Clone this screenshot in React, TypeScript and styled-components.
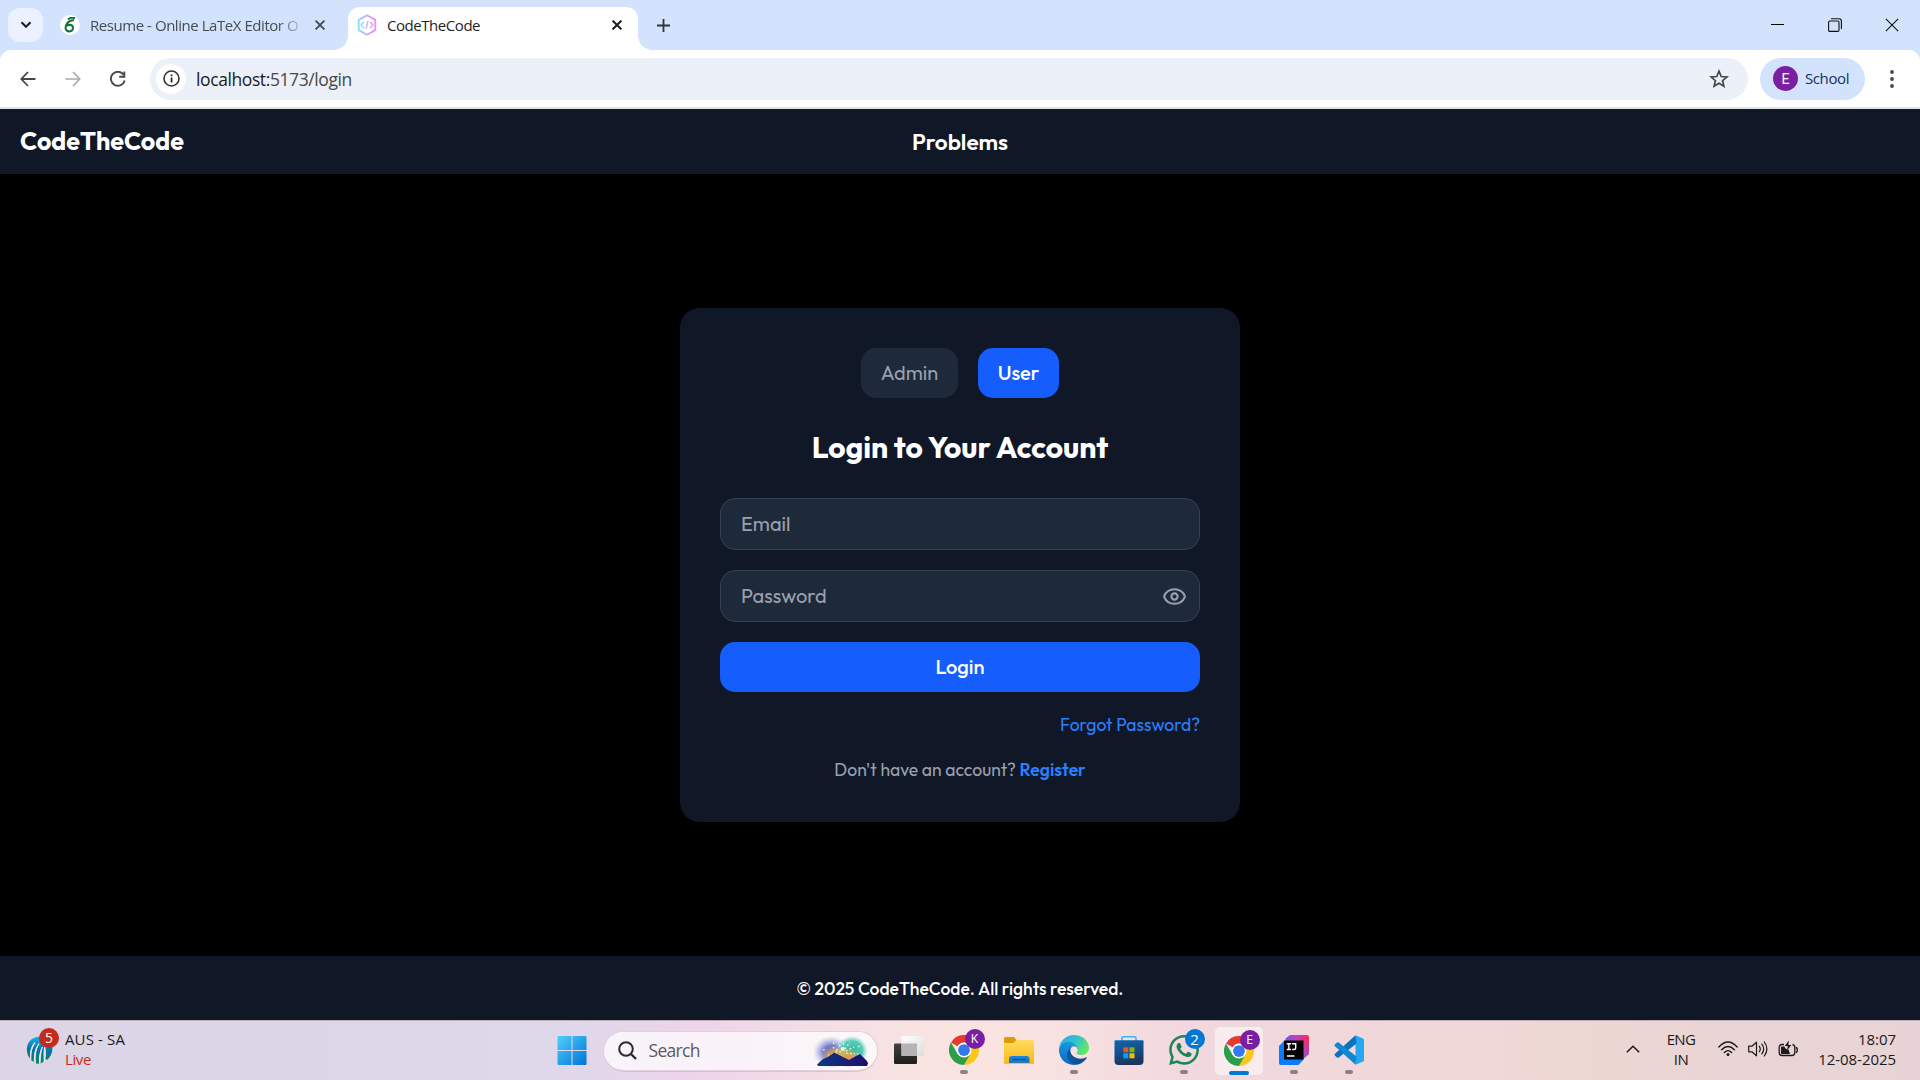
import React from "react";
import styled, { createGlobalStyle, css } from "styled-components";

const UI = `"Open Sans", "Noto Sans", sans-serif`;
const BRAND = `Outfit, Lato, sans-serif`;

const GlobalStyle = createGlobalStyle`
  *, *::before, *::after { box-sizing: border-box; }
  body { margin: 0; background: #000; overflow: hidden; }
  button, input { font: inherit; border: 0; margin: 0; padding: 0; background: none; color: inherit; }
  svg { display: block; flex: none; }
`;

const Screen = styled.div`
  width: 1920px;
  height: 1080px;
  display: flex;
  flex-direction: column;
  overflow: hidden;
`;

/* ---------- Browser: tab strip ---------- */

const TabStrip = styled.div`
  height: 50px;
  flex: none;
  display: flex;
  align-items: center;
  padding-left: 8px;
  background: #d3e3fd;
  font: 15px ${UI};
`;

const TabSearch = styled.button`
  width: 35px;
  height: 34px;
  border-radius: 12px;
  background: #ebf1fe;
  display: grid;
  place-items: center;
`;

const Tab = styled.div<{ $active?: boolean }>`
  position: relative;
  display: flex;
  align-items: center;
  height: 42px;
  letter-spacing: -0.45px;
  color: #474b50;
  width: 285px;
  padding: 0 4px 0 16px;
  margin-left: 1px;
  ${(p) =>
    p.$active &&
    css`
      align-self: flex-end;
      width: 290px;
      height: 43px;
      margin-left: 19px;
      padding: 0 16px 7px 9px;
      color: #1f1f1f;
      background: #fff;
      border-radius: 12px 12px 0 0;
      &::before,
      &::after {
        content: "";
        position: absolute;
        bottom: 0;
        width: 14px;
        height: 14px;
      }
      &::before {
        left: -14px;
        background: radial-gradient(circle at 0 0, transparent 13.5px, #fff 14px);
      }
      &::after {
        right: -14px;
        background: radial-gradient(circle at 100% 0, transparent 13.5px, #fff 14px);
      }
    `}
`;

const TabTitle = styled.span<{ $fade?: boolean }>`
  flex: 1;
  min-width: 0;
  white-space: nowrap;
  margin-left: 10px;
  ${(p) => p.$fade && "mask-image: linear-gradient(90deg, #000 188px, transparent 216px);"}
`;

const Favicon = styled.span`
  width: 20px;
  height: 20px;
  border-radius: 50%;
  background: #fff;
  display: grid;
  place-items: center;
`;

const NewTab = styled.button`
  width: 34px;
  height: 34px;
  margin-left: 8px;
  display: grid;
  place-items: center;
`;

const WindowControls = styled.div`
  margin-left: auto;
  display: flex;
  height: 100%;
`;

const WindowButton = styled.button`
  width: 57px;
  display: grid;
  place-items: center;
`;

/* ---------- Browser: address row ---------- */

const AddressBack = styled.div`
  height: 57px;
  flex: none;
  background: #d3e3fd;
`;

const AddressRow = styled.div`
  height: 57px;
  background: #fff;
  border-radius: 11px 11px 0 0;
  display: flex;
  align-items: center;
  padding: 0 10px 0 5px;
`;

const NavButton = styled.button`
  width: 45px;
  height: 42px;
  display: grid;
  place-items: center;
`;

const Omnibox = styled.div`
  flex: 1;
  height: 42px;
  margin-left: 10px;
  padding: 0 19px 0 6px;
  border-radius: 21px;
  background: #ebf0f9;
  display: flex;
  align-items: center;
  font: 17.5px ${UI};
  letter-spacing: -0.4px;
  color: #474747;
`;

const SiteInfo = styled.span`
  width: 30px;
  height: 30px;
  border-radius: 50%;
  background: #fff;
  display: grid;
  place-items: center;
  margin-right: 10px;
`;

const Url = styled.span`
  flex: 1;
  b { font-weight: 400; color: #1b1b1b; }
`;

const Profile = styled.button`
  height: 42px;
  width: 105px;
  margin-left: 12px;
  padding-left: 13px;
  border-radius: 21px;
  background: #d3e3fd;
  display: flex;
  align-items: center;
  gap: 7px;
  font: 15px ${UI};
  letter-spacing: -0.4px;
  color: #14305c;
`;

const ProfileName = styled.span`
  padding-bottom: 1px;
`;

const Avatar = styled.span`
  width: 25px;
  height: 25px;
  border-radius: 50%;
  background: #7b1fa2;
  color: #fff;
  display: grid;
  place-items: center;
  font: 14px Roboto, sans-serif;
  letter-spacing: 0;
`;

const Menu = styled.button`
  width: 36px;
  margin-left: 9px;
  display: grid;
  place-items: center;
`;

/* ---------- Site ---------- */

const SiteHeader = styled.header`
  flex: none;
  height: 67px;
  border-top: 2px solid #dfe4df;
  padding: 0 20px;
  background: #101828;
  color: #fff;
  font-family: ${BRAND};
  display: grid;
  grid-template-columns: 1fr auto 1fr;
  align-items: center;
`;

const Brand = styled.span`
  font-size: 25px;
  font-weight: 700;
  padding-bottom: 1px;
`;

const HeaderLink = styled.a`
  font-size: 22.5px;
  font-weight: 600;
`;

const Main = styled.main`
  flex: 1;
  min-height: 0;
  background: #000;
  display: grid;
  place-items: center;
  font-family: ${BRAND};
`;

const Card = styled.form`
  width: 560px;
  height: 514px;
  padding: 40px;
  border-radius: 20px;
  background: #101828;
  display: flex;
  flex-direction: column;
`;

const RoleSwitch = styled.div`
  display: flex;
  justify-content: center;
  gap: 20px;
`;

const RoleButton = styled.button<{ $selected?: boolean }>`
  height: 50px;
  width: ${(p) => (p.$selected ? 81 : 97)}px;
  padding-bottom: 2px;
  border-radius: 15px;
  font-size: 20px;
  font-weight: ${(p) => (p.$selected ? 500 : 400)};
  color: ${(p) => (p.$selected ? "#fff" : "#99a1af")};
  background: ${(p) => (p.$selected ? "#155dfc" : "#1e2939")};
`;

const Title = styled.h2`
  margin: 29px 0 31px;
  height: 40px;
  line-height: 40px;
  text-align: center;
  font-size: 30px;
  font-weight: 700;
  color: #fff;
`;

const Field = styled.label`
  height: 52px;
  margin-bottom: 20px;
  padding: 0 12px 0 20px;
  border: 1px solid #364153;
  border-radius: 15px;
  background: #1e2939;
  color: #99a1af;
  display: flex;
  align-items: center;
`;

const Input = styled.input`
  flex: 1;
  height: 100%;
  padding-bottom: 2px;
  outline: none;
  font-size: 20px;
  color: #fff;
  &::placeholder { color: #99a1af; opacity: 1; }
`;

const Submit = styled.button`
  height: 50px;
  padding-bottom: 2px;
  border-radius: 15px;
  background: #155dfc;
  color: #fff;
  font-size: 20px;
  font-weight: 500;
`;

const Forgot = styled.a`
  align-self: flex-end;
  margin-top: 20px;
  line-height: 25px;
  font-size: 17.5px;
  color: #2b7fff;
`;

const RegisterLine = styled.p`
  margin: 20px 0 0;
  line-height: 25px;
  text-align: center;
  font-size: 17.5px;
  color: #99a1af;
  a { font-weight: 600; color: #2b7fff; }
`;

const SiteFooter = styled.footer`
  flex: none;
  height: 64px;
  background: #101828;
  color: #fff;
  display: grid;
  place-items: center;
  font: 500 17.5px ${BRAND};
`;

/* ---------- Taskbar ---------- */

const Taskbar = styled.div`
  flex: none;
  height: 60px;
  border-top: 1px solid #b9aeb8;
  display: flex;
  align-items: center;
  font: 15px ${UI};
  color: #1a1a1a;
  background: linear-gradient(90deg, #ddd5e6 0, #dad6e8 260px, #dfd8ea 560px, #edd4ea 690px, #f3dde6 800px, #f9e4e1 930px, #f8e3e1 1040px, #f2d8df 1180px, #f1d8db 1330px, #edd7d2 1580px, #e9d5d5 1720px, #e8d3d6 1920px);
`;

const Widget = styled.div`
  width: 544.5px;
  padding: 0 0 3px 26px;
  display: flex;
  align-items: center;
`;

const WidgetIcon = styled.div`
  position: relative;
  width: 28px;
  height: 30px;
  margin: 2px 11px 0 0;
`;

const TwoLines = styled.div<{ $align?: string }>`
  display: flex;
  flex-direction: column;
  line-height: 20px;
  text-align: ${(p) => p.$align || "left"};
`;

const Score = styled.span`
  letter-spacing: 0.13px;
`;

const Live = styled.span`
  color: #c42b1c;
  letter-spacing: -0.4px;
`;

const Badge = styled.span<{ $bg: string; $top?: number; $right?: number; $size?: number }>`
  position: absolute;
  top: ${(p) => p.$top ?? -6}px;
  right: ${(p) => p.$right ?? -6}px;
  width: 20px;
  height: 20px;
  border-radius: 50%;
  background: ${(p) => p.$bg};
  color: #fff;
  display: grid;
  place-items: center;
  font: ${(p) => p.$size ?? 14}px/1 ${UI};
`;

const Slot = styled.div<{ $active?: boolean }>`
  width: 55px;
  height: 59px;
  display: flex;
  flex-direction: column;
  align-items: center;
  ${(p) =>
    p.$active &&
    css`
      width: 48px;
      height: 48px;
      margin: 0 3.5px;
      border-radius: 5px;
      background: #f9ecee;
      box-shadow: 0 0 0 1px #ecdadd;
    `}
`;

const SlotIcon = styled.div<{ $active?: boolean }>`
  position: relative;
  width: 30px;
  height: 30px;
  margin-top: ${(p) => (p.$active ? 9 : 14)}px;
`;

const Running = styled.span<{ $active?: boolean }>`
  width: ${(p) => (p.$active ? 20 : 8)}px;
  height: 4px;
  margin-top: 5px;
  border-radius: 2px;
  background: ${(p) => (p.$active ? "#0078d4" : "#8c8080")};
`;

const SearchBox = styled.div`
  width: 273px;
  height: 38px;
  margin: 0 4.5px 0 4px;
  padding: 0 9px 0 14px;
  border-radius: 19px;
  background: linear-gradient(90deg, #f8f4fa, #faf2f9 50%, #fdf8f7);
  box-shadow: 0 0 0 1px #e3cfdd, 0 1.5px 0 #bfa9b8;
  display: flex;
  align-items: center;
  font-size: 17.5px;
  letter-spacing: -0.7px;
  color: #5c5a5e;
`;

const SearchLabel = styled.span`
  flex: 1;
  margin-left: 12px;
  padding-bottom: 1px;
`;

const Tray = styled.div`
  margin-left: auto;
  padding: 0 24px 3px 0;
  display: flex;
  align-items: center;
`;

const TrayCell = styled.div<{ $w: number }>`
  width: ${(p) => p.$w}px;
  display: grid;
  place-items: center;
`;

const Language = styled(TwoLines)`
  width: 48px;
  margin-right: 8px;
  letter-spacing: -0.6px;
`;

const Clock = styled(TwoLines)`
  width: 93px;
  letter-spacing: -0.05px;
`;

/* ---------- Icons ---------- */

const CloseIcon = ({ size = 10, w = 1.8, color = "#333" }) => (
  <svg width={size} height={size} viewBox="0 0 10 10" stroke={color} strokeWidth={w}>
    <path d="M.6.6l8.8 8.8M9.4.6L.6 9.4" />
  </svg>
);

const Chrome = () => (
  <svg width="30" height="30" viewBox="0 0 48 48">
    <path d="M24 24L3.2 12A24 24 0 0 1 44.8 12z" fill="#e33b2e" />
    <path d="M24 12h20.8A24 24 0 0 1 24 48l10.4-18z" fill="#fdc719" />
    <path d="M13.6 30L3.2 12A24 24 0 0 0 24 48l10.4-18z" fill="#2a9f48" />
    <circle cx="24" cy="24" r="12" fill="#fff" />
    <circle cx="24" cy="24" r="9.4" fill="#3478ee" />
  </svg>
);

const Folder = () => (
  <svg width="30" height="30" viewBox="0 0 30 30">
    <defs>
      <linearGradient id="fold" x2="0" y2="1"><stop stopColor="#ffdc5e" /><stop offset="1" stopColor="#fbb917" /></linearGradient>
      <linearGradient id="fblue" x2="0" y2="1"><stop stopColor="#1789dc" /><stop offset="1" stopColor="#1a72c4" /></linearGradient>
    </defs>
    <path d="M0 3.500Q0 2 1.500 2H10l2.500 3L10 8H0z" fill="#dd9b09" />
    <path d="M0 8h9.500l3-3H29q1 0 1 1v22H0z" fill="url(#fold)" />
    <path d="M5 28v-4q0-3 3-3h14.500q3 0 3 3v4z" fill="url(#fblue)" />
    <path d="M8.500 24.500h13" stroke="#0b4e91" strokeWidth="1.200" />
    <path d="M0 28.300h30" stroke="#dc9d21" strokeWidth=".7" />
  </svg>
);

const Edge = () => (
  <svg width="30" height="30" viewBox="0 0 256 256">
    <defs>
      <linearGradient id="e1" x1="0" x2="1" y1=".6" y2=".6"><stop stopColor="#0c59a4" /><stop offset="1" stopColor="#114a8b" /></linearGradient>
      <linearGradient id="e2" x1=".7" y1="0" x2=".3" y2="1"><stop stopColor="#1b9de2" /><stop offset=".5" stopColor="#1288d8" /><stop offset="1" stopColor="#0a66c4" /></linearGradient>
      <linearGradient id="e3" x1="0" y1=".2" x2="1" y2=".7"><stop stopColor="#35a9e6" /><stop offset=".45" stopColor="#2fc2cf" /><stop offset="1" stopColor="#6be957" /></linearGradient>
    </defs>
    <path d="M231 190.500c-3.400 1.800-6.900 3.400-10.500 4.700a101.900 101.900 0 0 1-35.900 6.500c-47.300 0-88.500-32.500-88.500-74.300a31.500 31.500 0 0 1 16.400-27.300c-42.800 1.800-53.800 46.400-53.800 72.500 0 73.900 68.100 81.400 82.800 81.400 7.900 0 19.800-2.300 27-4.600l1.300-.4a128.300 128.300 0 0 0 66.600-52.800 4 4 0 0 0-5.400-5.700z" fill="url(#e1)" />
    <path d="M105.700 241.400a79.200 79.200 0 0 1-22.700-21.300 80.700 80.700 0 0 1 29.500-120c3.200-1.500 8.500-4.100 15.600-4a32.400 32.400 0 0 1 25.700 13 31.900 31.900 0 0 1 6.300 18.700c0-.2 24.500-79.600-80-79.600-43.900 0-80 41.700-80 78.200a130.200 130.200 0 0 0 12.100 56 128 128 0 0 0 156.400 67 75.500 75.500 0 0 1-62.800-8z" fill="url(#e2)" />
    <path d="M152.300 148.900c-.9 1-3.400 2.500-3.400 5.600 0 2.600 1.700 5.200 4.800 7.300 14.300 10 41.400 8.600 41.500 8.600a59.600 59.600 0 0 0 30.300-8.300 61.400 61.400 0 0 0 30.400-52.900c.3-22.400-8-37.300-11.300-43.900C223.500 23.900 177.700 0 128 0A128 128 0 0 0 0 126.200c.5-36.500 36.800-66 80-66 3.500 0 23.500.3 42 10a72.600 72.600 0 0 1 30.900 29.300c6.100 10.600 7.200 24.100 7.200 29.500s-2.700 13.300-7.800 19.900z" fill="url(#e3)" />
  </svg>
);

const Store = () => (
  <svg width="30" height="30" viewBox="0 0 30 30">
    <defs><linearGradient id="st" x2=".3" y2="1"><stop stopColor="#0d68b5" /><stop offset="1" stopColor="#1c365f" /></linearGradient></defs>
    <path d="M8 6V3q0-1.300 1.300-1.300h11.400Q22 1.700 22 3v3" fill="none" stroke="#2fb9ef" strokeWidth="1.600" />
    <path d="M.5 6.200q0-1 1-1h27q1 0 1 1V26q0 4-4 4h-21q-4 0-4-4z" fill="url(#st)" />
    <path d="M9.300 12.300h5v5h-5z" fill="#f25022" /><path d="M15.500 12.300h5v5h-5z" fill="#7fba00" />
    <path d="M9.300 18.300h5v5h-5z" fill="#00a4ef" /><path d="M15.500 18.300h5v5h-5z" fill="#ffb900" />
  </svg>
);

const WhatsApp = () => (
  <svg width="30" height="30" viewBox="0 0 24 24" fill="#1a8754">
    <path d="M17.472 14.382c-.297-.149-1.758-.867-2.030-.967-.273-.099-.471-.148-.67.150-.197.297-.767.966-.940 1.164-.173.199-.347.223-.644.075-.297-.150-1.255-.463-2.390-1.475-.883-.788-1.480-1.761-1.653-2.059-.173-.297-.018-.458.130-.606.134-.133.298-.347.446-.520.149-.174.198-.298.298-.497.099-.198.050-.371-.025-.520-.075-.149-.669-1.612-.916-2.207-.242-.579-.487-.5-.669-.510-.173-.008-.371-.010-.570-.010-.198 0-.520.074-.792.372-.272.297-1.040 1.016-1.040 2.479 0 1.462 1.065 2.875 1.213 3.074.149.198 2.096 3.200 5.077 4.487.709.306 1.262.489 1.694.625.712.227 1.360.195 1.871.118.571-.085 1.758-.719 2.006-1.413.248-.694.248-1.289.173-1.413-.074-.124-.272-.198-.570-.347m-5.421 7.403h-.004a9.870 9.870 0 0 1-5.031-1.378l-.361-.214-3.741.982.998-3.648-.235-.374a9.860 9.860 0 0 1-1.510-5.260c.001-5.450 4.436-9.884 9.888-9.884 2.640 0 5.122 1.030 6.988 2.898a9.825 9.825 0 0 1 2.893 6.994c-.003 5.450-4.437 9.884-9.885 9.884m8.413-18.297A11.815 11.815 0 0 0 12.050 0C5.495 0 .160 5.335.157 11.892c0 2.096.547 4.142 1.588 5.945L.057 24l6.305-1.654a11.882 11.882 0 0 0 5.683 1.448h.005c6.554 0 11.890-5.335 11.893-11.893a11.821 11.821 0 0 0-3.480-8.413z" />
  </svg>
);

const Idea = () => (
  <svg width="30" height="30" viewBox="0 0 30 30">
    <defs>
      <linearGradient id="ij" x1="0" y1=".3" x2="1" y2=".1"><stop stopColor="#6f57e8" /><stop offset=".45" stopColor="#b845c0" /><stop offset="1" stopColor="#ff2857" /></linearGradient>
      <linearGradient id="ijr" x2="0" y2="1"><stop stopColor="#ff2857" /><stop offset="1" stopColor="#8f55d8" /></linearGradient>
    </defs>
    <path d="M6.500 3.500L11 0h17q2 0 2 2v17l-7 6H6.500z" fill="url(#ij)" />
    <path d="M24 5l6-3v17l-6 5z" fill="url(#ijr)" />
    <path d="M0 11l5.500-5.500V24H25l-5.500 6H2q-2 0-2-2z" fill="#087cfa" />
    <path d="M5 5.500h19.500V24.500H5z" fill="#000" />
    <path d="M7.700 8.700h4.300M7.700 14.500h4.300M9.850 8.700v5.800M13 8.700h3.700v4q0 1.800-1.800 1.800h-1.700" stroke="#fff" strokeWidth="1.400" fill="none" />
    <path d="M8 21h7.500" stroke="#fff" strokeWidth="1.500" />
  </svg>
);

const VSCode = () => (
  <svg width="30" height="30" viewBox="0 0 30 30">
    <path d="M21.500.3L29 3.500q1 .5 1 1.500v20q0 1-1 1.500l-7.500 3.200z" fill="#25a7f3" />
    <path d="M21.500.3L1 18.800q-1 1 0 2l2 1.700q.8.600 1.700 0L22.500 8.500z" fill="#0a73bd" />
    <path d="M21.500 29.700L1 11.200q-1-1 0-2l2-1.700q.8-.6 1.700 0L22.500 21.500z" fill="#1387d0" />
  </svg>
);

const Start = () => (
  <svg width="30" height="30" viewBox="0 0 30 30">
    <defs><linearGradient id="win" x2="1" y2="1"><stop stopColor="#4fd0fb" /><stop offset="1" stopColor="#0074d6" /></linearGradient></defs>
    <path d="M.5 2q0-1 1-1H14.500v14H.5zM15.500 1H28.500q1 0 1 1v13h-14zM.5 16h14v14h-13q-1 0-1-1zM15.500 16h14v13q0 1-1 1h-13z" fill="url(#win)" />
  </svg>
);

const TaskView = () => (
  <svg width="30" height="30" viewBox="0 0 30 30">
    <defs>
      <linearGradient id="tv" x2="1" y2="1"><stop stopColor="#fff" /><stop offset="1" stopColor="#dedcdc" /></linearGradient>
      <linearGradient id="tb" x2="0" y2="1"><stop stopColor="#42423f" /><stop offset="1" stopColor="#1d1d1d" /></linearGradient>
    </defs>
    <rect x="0" y="8.500" width="23" height="20.500" rx="1.200" fill="url(#tb)" />
    <rect x="7.500" y="1" width="22.500" height="20" rx="1" fill="url(#tv)" />
    <rect x="7.500" y="8.500" width="15.500" height="12.500" fill="#b5b3b3" />
  </svg>
);

const Fireworks = () => (
  <svg width="54" height="32" viewBox="0 0 54 32">
    <defs>
      <radialGradient id="fw1"><stop stopColor="#4a51b8" /><stop offset=".45" stopColor="#6a74c9" stopOpacity=".85" /><stop offset="1" stopColor="#9aa2e4" stopOpacity="0" /></radialGradient>
      <radialGradient id="fw2"><stop stopColor="#35b9a0" /><stop offset=".65" stopColor="#3fc7b3" stopOpacity=".9" /><stop offset="1" stopColor="#8ce0d6" stopOpacity="0" /></radialGradient>
      <radialGradient id="fw3"><stop stopColor="#f58a55" /><stop offset=".5" stopColor="#dfa94c" stopOpacity=".8" /><stop offset="1" stopColor="#dfb95c" stopOpacity="0" /></radialGradient>
      <linearGradient id="mt" x2="1"><stop stopColor="#0e3b7c" /><stop offset="1" stopColor="#1b0d70" /></linearGradient>
    </defs>
    <ellipse cx="17" cy="17" rx="18" ry="16" fill="url(#fw1)" />
    <ellipse cx="38" cy="16" rx="16" ry="15.500" fill="url(#fw2)" />
    <ellipse cx="21" cy="20" rx="13" ry="9" fill="url(#fw3)" />
    <ellipse cx="34" cy="23" rx="12" ry="10" fill="url(#fw3)" />
    <path d="M28 15l-3-6M29 14l1-8M31 14l5-7M32 16l8-4M32 18l9 1M24 15l-6-3M23 18l-9 2M27 17l-6-1M20 9l-2-3M44 12l3-2M43 19l4 1M9 15l4-1" stroke="#fff6d8" strokeWidth="1.200" strokeDasharray="1.800 2.200" />
    <circle cx="29" cy="14" r="2.200" fill="#fff4d0" opacity=".85" />
    <path d="M3 29.500L9 24l5-2 6-4.500 7 3.500 8 4 7-4 4-2 7 7 1 2.500-1 2.500H4z" fill="url(#mt)" />
  </svg>
);

const Cricket = () => (
  <svg width="28" height="30" viewBox="0 0 28 30">
    <defs><linearGradient id="icc" x1=".6" x2=".5" y2="1"><stop stopColor="#12b8ea" /><stop offset=".5" stopColor="#0871a8" /><stop offset="1" stopColor="#078a5a" /></linearGradient></defs>
    <path d="M1.500 19Q-1 9 6 4q7-4 13-1.500 6 3.500 7.500 10.500-.5 8-5.500 12l-1.500-1Q21 17 19 12l-1 2q1 7-.5 13l-3 1.500Q15 20 16 12q-3 7-3 16.800l-3-.3Q8.500 19 12.500 9 7 16 8 27l-2.500-1.500Q4 17 8.500 8 3.500 13 4 23.500 2 21.500 1.500 19z" fill="url(#icc)" />
    <path d="M4.600 23Q4 14 9 7.500M9 27.500Q7.500 17 13 8.500M16.500 12Q13 19 13.700 28M19 12Q17.500 18 18.600 27" stroke="#ece9f3" strokeWidth="1.300" fill="none" />
  </svg>
);

type AppEntry = { id: string; icon: React.ReactNode; running?: boolean; active?: boolean; badge?: string; badgeBg?: string; badgeSize?: number };

const apps: AppEntry[] = [
  { id: "tasks", icon: <TaskView /> },
  { id: "chrome-k", icon: <Chrome />, running: true, badge: "K", badgeBg: "#7b1fa2", badgeSize: 12 },
  { id: "files", icon: <Folder /> },
  { id: "edge", icon: <Edge />, running: true },
  { id: "store", icon: <Store /> },
  { id: "whatsapp", icon: <WhatsApp />, running: true, badge: "2", badgeBg: "#0078d4", badgeSize: 15 },
  { id: "chrome-e", icon: <Chrome />, running: true, active: true, badge: "E", badgeBg: "#7b1fa2", badgeSize: 12 },
  { id: "idea", icon: <Idea />, running: true },
  { id: "vscode", icon: <VSCode />, running: true },
];

export default function App() {
  return (
    <Screen>
      <GlobalStyle />
      <TabStrip>
        <TabSearch aria-label="Search tabs">
          <svg width="12" height="8" viewBox="0 0 12 8" fill="none" stroke="#1f1f1f" strokeWidth="2.200"><path d="M1.500 1.200L6 5.700l4.500-4.500" /></svg>
        </TabSearch>
        <Tab>
          <Favicon>
            <svg width="12" height="16" viewBox="0 0 12 16" fill="none" stroke="#13703b" strokeWidth="2">
              <path d="M11 1.300Q6.500 0 4 2.500" />
              <path d="M10 3.200Q6 3 3.500 6 1.200 8.700 1.500 11.200 2 14.500 5.300 14.500 8.800 14.300 9 11 8.800 7.800 5.600 7.800 3.500 8 2.600 9.300" />
            </svg>
          </Favicon>
          <TabTitle $fade>Resume - Online LaTeX Editor O</TabTitle>
          <CloseIcon color="#44474c" />
        </Tab>
        <Tab $active>
          <svg width="20" height="22" viewBox="0 0 20 22" fill="none" strokeLinejoin="round">
            <defs><linearGradient id="hex" x2="1"><stop stopColor="#86dcfb" /><stop offset=".5" stopColor="#bfb0fb" /><stop offset="1" stopColor="#f58af5" /></linearGradient></defs>
            <path d="M10 1.200l8.300 4.700v10.200L10 20.800l-8.300-4.700V5.900z" stroke="url(#hex)" strokeWidth="1.800" />
            <path d="M7 8l-3 3 3 3M13 8l3 3-3 3M11 7l-2 8" stroke="url(#hex)" strokeWidth="1.300" />
          </svg>
          <TabTitle>CodeTheCode</TabTitle>
          <CloseIcon w={2} color="#1f1f1f" />
        </Tab>
        <NewTab aria-label="New tab">
          <svg width="13" height="13" viewBox="0 0 13 13" stroke="#333" strokeWidth="1.800"><path d="M6.500 0v13M0 6.500h13" /></svg>
        </NewTab>
        <WindowControls>
          <WindowButton aria-label="Minimize"><svg width="13" height="13" viewBox="0 0 13 13"><path d="M0 5h13v1H0z" fill="#000" /></svg></WindowButton>
          <WindowButton aria-label="Restore">
            <svg width="14" height="14" viewBox="0 0 14 14" fill="none" stroke="#111" strokeWidth="1.100"><rect x=".6" y="3" width="10.400" height="10.400" rx="1.200" /><path d="M3 .7h8Q13.400.7 13.400 3v8" /></svg>
          </WindowButton>
          <WindowButton aria-label="Close"><CloseIcon size={14} w={0.8} color="#111" /></WindowButton>
        </WindowControls>
      </TabStrip>

      <AddressBack>
        <AddressRow>
          <NavButton aria-label="Back"><svg width="16" height="16" viewBox="0 0 16 16" fill="none" stroke="#474747" strokeWidth="1.800"><path d="M15.500 8H1.500M8 1L1.300 8 8 15" /></svg></NavButton>
          <NavButton aria-label="Forward"><svg width="16" height="16" viewBox="0 0 16 16" fill="none" stroke="#ababab" strokeWidth="1.700"><path d="M.5 8h14M8 1l6.700 7L8 15" /></svg></NavButton>
          <NavButton aria-label="Reload">
            <svg width="16" height="16" viewBox="0 0 16 16" fill="none" stroke="#474747" strokeWidth="1.900"><path d="M13.600 3.700A7 7 0 1 0 14.700 9.500" /><path d="M14.300.5v5.200H9.200" /></svg>
          </NavButton>
          <Omnibox>
            <SiteInfo>
              <svg width="17" height="17" viewBox="0 0 17 17"><circle cx="8.500" cy="8.500" r="7.500" fill="none" stroke="#333" strokeWidth="1.600" /><path d="M7.700 7.500h1.700v5H7.700zM7.700 4.500h1.700v1.700H7.700z" fill="#222" /></svg>
            </SiteInfo>
            <Url><b>localhost:</b>5173/login</Url>
            <svg width="20" height="20" viewBox="0 0 20 20" fill="none" stroke="#474747" strokeWidth="1.700"><path d="M10 2.200l2.200 5.300 5.700.5-4.300 3.700 1.300 5.600-4.900-3-4.900 3 1.300-5.600L2.100 8l5.700-.5z" /></svg>
          </Omnibox>
          <Profile><Avatar>E</Avatar><ProfileName>School</ProfileName></Profile>
          <Menu aria-label="Menu"><svg width="4" height="18" viewBox="0 0 4 18" fill="#474747"><circle cx="2" cy="2" r="1.900" /><circle cx="2" cy="9" r="1.900" /><circle cx="2" cy="16" r="1.900" /></svg></Menu>
        </AddressRow>
      </AddressBack>

      <SiteHeader>
        <Brand>CodeTheCode</Brand>
        <HeaderLink>Problems</HeaderLink>
      </SiteHeader>
      <Main>
        <Card>
          <RoleSwitch>
            <RoleButton type="button">Admin</RoleButton>
            <RoleButton type="button" $selected>User</RoleButton>
          </RoleSwitch>
          <Title>Login to Your Account</Title>
          <Field><Input placeholder="Email" /></Field>
          <Field>
            <Input type="password" placeholder="Password" />
            <svg width="25" height="25" viewBox="0 0 24 24" fill="none" stroke="#99a1af" strokeWidth="2" strokeLinecap="round" strokeLinejoin="round">
              <path d="M2.062 12.348a1 1 0 0 1 0-.696 10.750 10.750 0 0 1 19.876 0 1 1 0 0 1 0 .696 10.750 10.750 0 0 1-19.876 0" />
              <circle cx="12" cy="12" r="3" />
            </svg>
          </Field>
          <Submit type="button">Login</Submit>
          <Forgot>Forgot Password?</Forgot>
          <RegisterLine>Don't have an account? <a>Register</a></RegisterLine>
        </Card>
      </Main>
      <SiteFooter>© 2025 CodeTheCode. All rights reserved.</SiteFooter>

      <Taskbar>
        <Widget>
          <WidgetIcon><Cricket /><Badge $bg="#c42b1c" $top={-7} $right={-5} $size={14}>5</Badge></WidgetIcon>
          <TwoLines><Score>AUS - SA</Score><Live>Live</Live></TwoLines>
        </Widget>
        <Slot><SlotIcon><Start /></SlotIcon></Slot>
        <SearchBox>
          <svg width="19" height="19" viewBox="0 0 19 19" fill="none" stroke="#2b2b2b" strokeWidth="2"><circle cx="8" cy="8" r="6.800" /><path d="M13 13l5 5" strokeWidth="2.400" /></svg>
          <SearchLabel>Search</SearchLabel>
          <Fireworks />
        </SearchBox>
        {apps.map((a) => (
          <Slot key={a.id} $active={a.active}>
            <SlotIcon $active={a.active}>
              {a.icon}
              {a.badge && <Badge $bg={a.badgeBg!} $size={a.badgeSize}>{a.badge}</Badge>}
            </SlotIcon>
            {a.running && <Running $active={a.active} />}
          </Slot>
        ))}
        <Tray>
          <TrayCell $w={48}><svg width="14" height="8" viewBox="0 0 14 8" fill="none" stroke="#1a1a1a" strokeWidth="1.500"><path d="M.8 7.200L7 1.200l6.200 6" /></svg></TrayCell>
          <Language $align="center"><span>ENG</span><span>IN</span></Language>
          <TrayCell $w={30}>
            <svg width="20" height="16" viewBox="0 0 20 16" fill="none" stroke="#1a1a1a" strokeWidth="1.300" strokeLinecap="round"><path d="M.8 6Q10-4 19.200 6M3.600 8.800q6.400-6.600 12.800 0M6.300 11.500q3.700-3.800 7.400 0" /><circle cx="10" cy="13.600" r="1.500" fill="#1a1a1a" stroke="none" /></svg>
          </TrayCell>
          <TrayCell $w={30}>
            <svg width="20" height="18" viewBox="0 0 20 18" fill="none" stroke="#1a1a1a" strokeWidth="1.200" strokeLinejoin="round" strokeLinecap="round"><path d="M.7 6.200h3.200L8.500 2.200v13.600l-4.600-4H.7zM11.300 6.300q2 2.700 0 5.400M13.800 4.200q3.800 4.800 0 9.600M16.300 2q5.200 7 0 14" /></svg>
          </TrayCell>
          <TrayCell $w={30}>
            <svg width="20" height="18" viewBox="0 0 20 18"><path d="M6 4.500H4.200Q1.200 4.500 1.200 7.500v5q0 3 3 3h9.600q3 0 3-3v-5q0-2.600-2.300-3" fill="none" stroke="#1a1a1a" strokeWidth="1.300" /><path d="M17.800 7.500q1.500 0 1.500 2.500t-1.500 2.500" fill="none" stroke="#1a1a1a" strokeWidth="1.300" /><path d="M3 7.500q0-1 1-1h2.500q.5 3 4 3l1.500 4.500H4q-1 0-1-1z" fill="#1a1a1a" /><path d="M10.800.5L6.800 6h3L9 10.500 13.400 5h-3z" fill="#1a1a1a" /></svg>
          </TrayCell>
          <Clock $align="right"><span>18:07</span><span>12-08-2025</span></Clock>
        </Tray>
      </Taskbar>
    </Screen>
  );
}
